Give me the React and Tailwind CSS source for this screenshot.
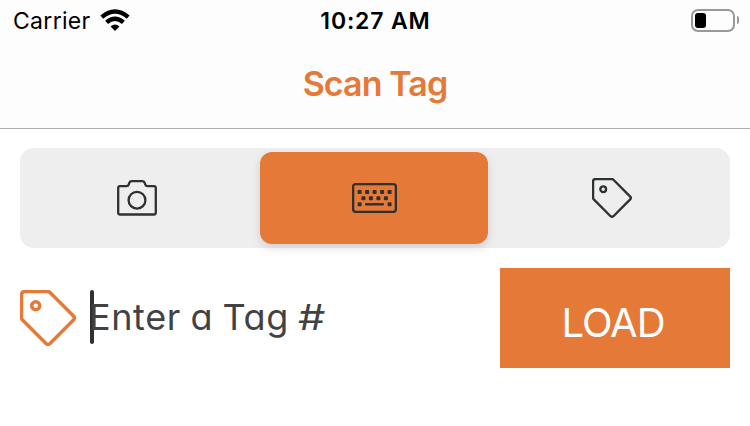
import React from 'react';

function TagIcon({ className, strokeWidth }) {
  return (
    <svg viewBox="0 0 56 56" className={className} fill="none" stroke="currentColor" strokeWidth={strokeWidth} strokeLinejoin="round">
      <path d="M5 1.5H27.5Q29 1.5 30 2.5L53.5 26Q55.2 28 53.5 30L30 53.5Q28 55.2 26 53.5L2.5 30Q1.5 29 1.5 27.5V5Q1.5 1.5 5 1.5Z" />
      <circle cx="15.7" cy="15.7" r="4" />
    </svg>
  );
}

function CameraIcon() {
  return (
    <svg viewBox="0 0 40 36" className="h-9 w-10" fill="none" stroke="currentColor" strokeWidth="2.3">
      <path d="M3 6.2H9.5Q11.2 6.2 11.7 4.6L12.4 2.7Q13 1.2 14.7 1.2H25.3Q27 1.2 27.6 2.7L28.3 4.6Q28.8 6.2 30.5 6.2H37Q38.8 6.2 38.8 8.2V32.5Q38.8 34.5 37 34.5H3Q1.2 34.5 1.2 32.5V8.2Q1.2 6.2 3 6.2Z" />
      <circle cx="20" cy="20.2" r="8.4" />
    </svg>
  );
}

const KEYS = [
  [5.6, 7], [13.1, 7], [20.6, 7], [28.1, 7], [35.6, 7],
  [9.4, 13.2], [16.9, 13.2], [24.4, 13.2], [31.9, 13.2],
  [5.6, 19.3], [35.6, 19.3],
];

function KeyboardIcon() {
  return (
    <svg viewBox="0 0 45 30" className="h-[30px] w-[45px]" fill="currentColor">
      <rect x="1.15" y="1.15" width="42.7" height="27.7" rx="2.6" fill="none" stroke="currentColor" strokeWidth="2.3" />
      {KEYS.map(([x, y]) => (
        <rect key={`${x}-${y}`} x={x} y={y} width="4" height="4" rx="0.8" />
      ))}
      <rect x="13" y="20" width="19" height="2.5" rx="1" />
    </svg>
  );
}

function WifiIcon() {
  return (
    <svg viewBox="0 0 30 22" className="mb-[2px] ml-[9px] h-[22px] w-[30px]" fill="none" stroke="black" strokeWidth="4.4">
      <path d="M1.8 8.1Q15 -3.2 28.2 8.1" />
      <path d="M6.6 13.4Q15 6.2 23.4 13.4" />
      <path d="M10.6 17.6Q15 13.6 19.4 17.6L15 22Z" fill="black" stroke="none" />
    </svg>
  );
}

function Battery() {
  return (
    <div className="mb-px flex items-center">
      <div className="h-[23px] w-11 rounded-[7px] border-2 border-[#999] p-0.5">
        <div className="h-[15px] w-[11px] rounded-[3px] bg-black" />
      </div>
      <div className="ml-[2px] h-2 w-[2px] rounded-r-full bg-[#999]" />
    </div>
  );
}

export default function App() {
  return (
    <div className="h-[426px] w-[750px] overflow-hidden bg-white font-['Inter',sans-serif] text-[#2f3131]">
      <header className="h-[129px] border-b border-[#adadad] bg-[#fdfdfd]">
        <div className="grid h-10 grid-cols-[240px_270px_240px] items-center text-black">
          <div className="flex items-center pl-[13px]">
            <span className="w-[78px] whitespace-nowrap pt-px text-[23px] leading-10 tracking-[0.3px]">Carrier</span>
            <WifiIcon />
          </div>
          <span className="pl-px pt-px text-center text-[23px] font-semibold leading-10 tracking-[0.85px]">10:27 AM</span>
          <div className="flex justify-end pr-[11px]"><Battery /></div>
        </div>
        <h1 className="pt-[24px] text-center text-[34px] font-semibold leading-10 tracking-[-0.9px] text-[#e57937]">Scan Tag</h1>
      </header>
      <main className="px-5 pt-[19px]">
        <div className="flex h-[100px] rounded-[14px] bg-[#eeeeee] py-1">
          <button className="flex w-60 items-center justify-center pr-[6px]"><CameraIcon /></button>
          <button className="flex w-[228px] items-center justify-center rounded-xl bg-[#e57937] shadow-[0_4px_10px_rgba(0,0,0,0.13)]"><KeyboardIcon /></button>
          <button className="flex flex-1 items-center justify-center pl-[6px]"><TagIcon className="h-10 w-10" strokeWidth="3.3" /></button>
        </div>
        <div className="mt-5 flex h-[100px] items-center">
          <TagIcon className="h-14 w-14 text-[#e57937]" strokeWidth="3.5" />
          <div className="mb-[2px] ml-[14px] h-[54px] w-1 rounded-full bg-[#2f3131]" />
          <div className="-ml-[5px] mb-[2px] w-[411px] whitespace-nowrap text-[36px] font-normal leading-[54px] tracking-[0.6px] text-[#424242] [font-feature-settings:'cv11'] [word-spacing:-1.2px]">
            Enter a Tag <span className="inline-block origin-left scale-x-[1.2]">#</span>
          </div>
          <button className="h-[100px] w-[230px] shrink-0 bg-[#e57937] pr-[4px] pt-[10px] text-[40px] font-normal leading-[90px] tracking-[-1px] text-white">LOAD</button>
        </div>
      </main>
    </div>
  );
}
